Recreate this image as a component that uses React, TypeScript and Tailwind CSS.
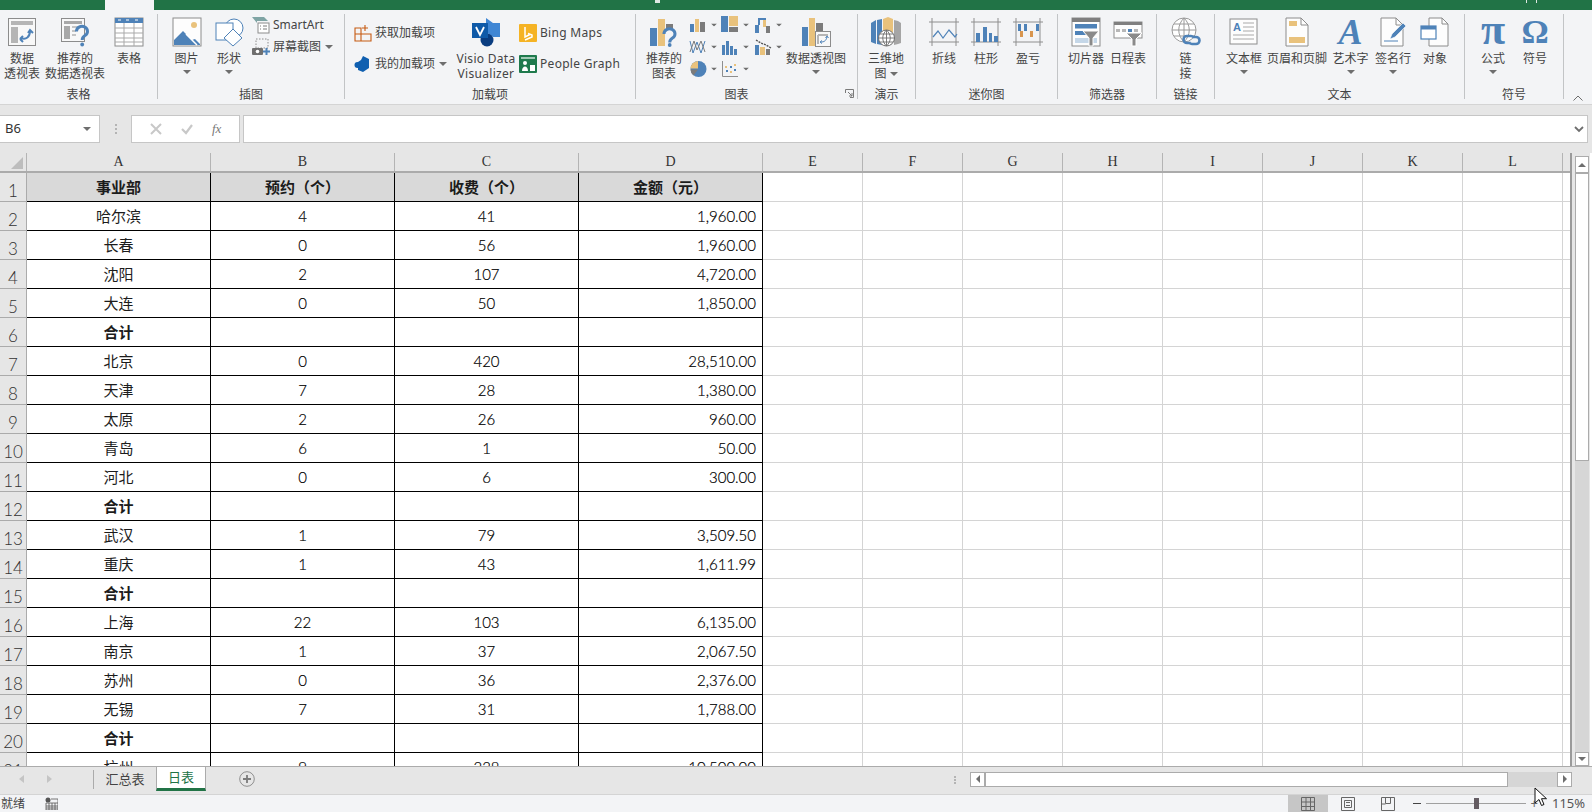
import type { ReactNode } from 'react'

const BLUE = '#4e82b8'
const TAN = '#e9c27c'
const GRAY = '#7b7b7b'
const FRAME = '#8c8c8c'

type RowData = [string, string, string, string, boolean?]

const rows: RowData[] = [
  ['事业部', '预约（个）', '收费（个）', '金额（元）', true],
  ['哈尔滨', '4', '41', '1,960.00'],
  ['长春', '0', '56', '1,960.00'],
  ['沈阳', '2', '107', '4,720.00'],
  ['大连', '0', '50', '1,850.00'],
  ['合计', '', '', '', true],
  ['北京', '0', '420', '28,510.00'],
  ['天津', '7', '28', '1,380.00'],
  ['太原', '2', '26', '960.00'],
  ['青岛', '6', '1', '50.00'],
  ['河北', '0', '6', '300.00'],
  ['合计', '', '', '', true],
  ['武汉', '1', '79', '3,509.50'],
  ['重庆', '1', '43', '1,611.99'],
  ['合计', '', '', '', true],
  ['上海', '22', '103', '6,135.00'],
  ['南京', '1', '37', '2,067.50'],
  ['苏州', '0', '36', '2,376.00'],
  ['无锡', '7', '31', '1,788.00'],
  ['合计', '', '', '', true],
  ['杭州', '9', '238', '10,500.00']
]

const sideCols = ['E', 'F', 'G', 'H', 'I', 'J', 'K', 'L']

function Caret({ className = '' }: { className?: string }) {
  return (
    <svg viewBox="0 0 8 4" className={`h-[4px] w-[8px] shrink-0 ${className}`}>
      <path d="M0 0h8L4 4z" fill="#6e6e6e" />
    </svg>
  )
}

function Icon({ children, size = 30 }: { children: ReactNode; size?: number }) {
  return (
    <svg viewBox={`0 0 ${size} ${size}`} width={size} height={size} className="shrink-0">
      {children}
    </svg>
  )
}

function Small({ children }: { children: ReactNode }) {
  return (
    <svg viewBox="0 0 18 18" width={18} height={18} className="shrink-0">
      {children}
    </svg>
  )
}

function Group({
  className,
  pad = '',
  labelClass = '',
  label,
  children,
  extra
}: {
  className: string
  pad?: string
  labelClass?: string
  label: string
  children: ReactNode
  extra?: ReactNode
}) {
  return (
    <div className={`relative mt-[4px] flex h-[85px] shrink-0 flex-col border-r border-[#c2c4c6] ${className}`}>
      <div className={`flex h-[73px] shrink-0 ${pad}`}>{children}</div>
      <div className={`h-[12px] text-center leading-[15px] ${labelClass}`}>{label}</div>
      {extra}
    </div>
  )
}

function BigBtn({ className, icon, lines, caret }: { className: string; icon: ReactNode; lines: string[]; caret?: boolean }) {
  return (
    <div className={`flex shrink-0 flex-col items-center pt-[3px] ${className}`}>
      <div className="flex h-[30px] items-center justify-center">{icon}</div>
      <div className="mt-[4px] whitespace-nowrap text-center leading-[15px]">
        {lines.map((line) => (
          <div key={line}>{line}</div>
        ))}
      </div>
      {caret ? <Caret className="mt-[4px]" /> : null}
    </div>
  )
}

function SmallBtn({ icon, text, caret, className = '' }: { icon: ReactNode; text: string; caret?: boolean; className?: string }) {
  return (
    <div className={`flex h-[22px] items-center whitespace-nowrap ${className}`}>
      {icon}
      <span className="ml-[3px]">{text}</span>
      {caret ? <Caret className="ml-[4px]" /> : null}
    </div>
  )
}

function ChartBtn({ icon }: { icon: ReactNode }) {
  return (
    <div className="flex h-[22px] w-[32px] items-center">
      {icon}
      <Caret className="ml-[3px] scale-75" />
    </div>
  )
}

const PivotIcon = (
  <Icon>
    <rect x="1.5" y="1.5" width="27" height="27" fill="#f8f8f8" stroke={FRAME} />
    <rect x="4" y="4" width="22" height="4" fill="#b5b5b5" />
    <rect x="4" y="10" width="7" height="16" fill="#b5b5b5" />
    <path d="M14 21c5 2 9-1 9-7M13 22l3-3M13 22l3 3M21 16l2-3 3 3" fill="none" stroke={BLUE} strokeWidth="2" />
  </Icon>
)

const RecommendPivotIcon = (
  <Icon>
    <rect x="1.5" y="1.5" width="23" height="23" fill="#f8f8f8" stroke={FRAME} />
    <rect x="4" y="4" width="18" height="3" fill="#a8a8a8" />
    <rect x="4" y="9" width="6" height="13" fill="#a8a8a8" />
    <path d="M12 10h8M12 14h4M12 18h4" stroke="#c4c4c4" strokeWidth="2" />
    <path d="M16.500 14.500a5.500 5 0 1 1 8.500 4c-2 1.300-2.800 2.300-2.800 4.500" fill="none" stroke={BLUE} strokeWidth="3" />
    <circle cx="22.200" cy="27.500" r="1.900" fill={BLUE} />
  </Icon>
)

const TableIcon = (
  <Icon>
    <rect x="1" y="1" width="28" height="28" fill="#fff" stroke={FRAME} />
    <rect x="1" y="1" width="28" height="5" fill={BLUE} />
    <path d="M4 3h3M12 3h3M21 3h3" stroke="#fff" />
    <path d="M1 11h28M1 16h28M1 21h28M1 25h28M10 6v23M20 6v23" stroke="#a9a9a9" />
  </Icon>
)

const PictureIcon = (
  <Icon>
    <rect x="1" y="1" width="28" height="28" fill="#fdfdfd" stroke={FRAME} />
    <circle cx="22" cy="8" r="3" fill={TAN} />
    <path d="M2 28V23l9-9 9 9 3-1 5 5v1z" fill={BLUE} />
    <path d="M14 17l11 11" stroke="#fff" strokeWidth="1.500" />
  </Icon>
)

const ShapesIcon = (
  <Icon>
    <circle cx="20" cy="11" r="9" fill="#fff" stroke={BLUE} />
    <rect x="2" y="6" width="17" height="17" fill="#fff" stroke={BLUE} />
    <path d="M19 12l9 9-9 8-9-8z" fill="#fff" stroke={BLUE} />
  </Icon>
)

const VisioIcon = (
  <Icon size={30}>
    <path d="M15 1l7 5h7v14h-7l-7-5z" fill="#3f86d4" />
    <circle cx="16" cy="23" r="6.500" fill="#0a3d80" />
    <rect x="1" y="6" width="16" height="15" fill="#0f5aa8" />
    <path d="M5 10l4 8 4-8" fill="none" stroke="#fff" strokeWidth="1.800" />
  </Icon>
)

const RecommendChartIcon = (
  <Icon>
    <rect x="1" y="11" width="7" height="18" fill={BLUE} />
    <rect x="9" y="2" width="7" height="27" fill={TAN} />
    <rect x="17" y="7" width="7" height="5" fill={GRAY} />
    <path d="M15 17a5.500 5 0 1 1 8.500 4c-2 1.300-2.800 2.300-2.800 4.500" fill="none" stroke={BLUE} strokeWidth="3" />
    <circle cx="20.700" cy="28" r="1.900" fill={BLUE} />
  </Icon>
)

const PivotChartIcon = (
  <Icon>
    <rect x="1" y="10" width="6" height="19" fill={BLUE} />
    <rect x="8" y="1" width="6" height="28" fill={TAN} />
    <rect x="15" y="6" width="7" height="10" fill={GRAY} />
    <rect x="14.500" y="14.500" width="15" height="15" fill="#f8f8f8" stroke={FRAME} />
    <path d="M17 18h10M17 18v9" stroke="#b5b5b5" strokeWidth="2" />
    <path d="M20 25c3 0 5-1 6-5M19 25l2-1.500M19 25l2 1.500M24.500 21l1.500-2 1.500 2" fill="none" stroke={BLUE} />
  </Icon>
)

const Map3dIcon = (
  <Icon>
    <path d="M0 6l5-3v24l-5-2z" fill={BLUE} />
    <path d="M6 3l5-1v26l-5-1z" fill={BLUE} />
    <path d="M12 2l5-2 5 2v20H12z" fill={TAN} />
    <path d="M23 3l4 1 3 2v20l-3 1-4 1z" fill="#a5a5a5" />
    <circle cx="15.500" cy="21" r="8" fill="#fff" stroke="#6f6f6f" />
    <path d="M7.500 21h16M15.500 13v16M9 17h13M9 25h13M15.500 13c-5 5-5 11 0 16M15.500 13c5 5 5 11 0 16" fill="none" stroke="#6f6f6f" strokeWidth=".9" />
  </Icon>
)

const LineSparkIcon = (
  <Icon>
    <path d="M0 5h30M0 25h30M3 1v28M27 1v28" stroke="#8e8e8e" />
    <path d="M4 20l5-6 5 7 6-8 6 7 2-3" fill="none" stroke={BLUE} strokeWidth="1.200" />
  </Icon>
)

const BarSparkIcon = (
  <Icon>
    <path d="M0 5h30M0 25h30M3 1v28M27 1v28" stroke="#8e8e8e" />
    <path d="M5 16h4v9H5zM12 10h4v15h-4zM18 16h3v9h-3zM23 19h4v6h-4z" fill={BLUE} />
  </Icon>
)

const WinLossIcon = (
  <Icon>
    <path d="M0 5h30M0 25h30M3 1v28M27 1v28" stroke="#8e8e8e" />
    <path d="M5 7h3v7H5zM11 7h3v7h-3zM23 7h3v7h-3z" fill={BLUE} />
    <path d="M7 14h3v6H7zM17 14h3v6h-3z" fill="#d9964f" />
  </Icon>
)

const SlicerIcon = (
  <Icon>
    <rect x="1" y="1" width="28" height="28" fill="#fdfdfd" stroke={FRAME} />
    <rect x="1" y="1" width="28" height="4" fill="#7f7f7f" />
    <rect x="4" y="7" width="22" height="4.500" fill={BLUE} />
    <rect x="4" y="14" width="11" height="4" fill={BLUE} />
    <rect x="4" y="21" width="22" height="5" fill="#c5d7e8" />
    <path d="M12 14h16l-6 7v8h-4v-8z" fill="#8a8a8a" stroke="#fff" />
  </Icon>
)

const TimelineIcon = (
  <Icon>
    <rect x="1" y="5" width="28" height="16" fill="#fdfdfd" stroke={FRAME} />
    <rect x="1" y="5" width="28" height="3" fill="#7f7f7f" />
    <path d="M3 12h4v3H3zM9 12h4v3H9z" fill="#b7b7b7" />
    <path d="M15 12h4v3h-4z" fill={BLUE} />
    <path d="M21 12h4v3h-4z" fill="#b7b7b7" />
    <path d="M13 16h16l-6 6v7h-4v-7z" fill="#8a8a8a" stroke="#fff" />
  </Icon>
)

const LinkIcon = (
  <Icon>
    <circle cx="13" cy="13" r="12" fill="#fff" stroke="#9a9a9a" />
    <path d="M1 13h24M13 1v24M3 7h20M3 19h20M13 1c-7 7-7 17 0 24M13 1c7 7 7 17 0 24" fill="none" stroke="#9a9a9a" />
    <path d="M19 26h-3a3.500 3.500 0 0 1 0-7h4a3.500 3.500 0 0 1 3 2M22 20h3a3.500 3.500 0 0 1 0 7h-4a3.500 3.500 0 0 1-3-2" fill="none" stroke={BLUE} strokeWidth="2.600" />
  </Icon>
)

const TextBoxIcon = (
  <Icon>
    <rect x="1" y="2" width="27" height="25" fill="#fdfdfd" stroke={FRAME} />
    <text x="4" y="14" fontSize="11" fontWeight="700" fontFamily="Liberation Sans" fill={BLUE}>A</text>
    <path d="M14 6h11M14 10h11M14 14h11M4 18h21M4 22h21" stroke="#a9a9a9" />
  </Icon>
)

const HeaderFooterIcon = (
  <Icon>
    <path d="M4 1h15l7 7v21H4z" fill="#fdfdfd" stroke={FRAME} />
    <path d="M19 1v7h7" fill="none" stroke={FRAME} />
    <rect x="7" y="4" width="8" height="5" fill={TAN} />
    <rect x="7" y="20" width="16" height="6" fill={TAN} />
  </Icon>
)

const SignatureIcon = (
  <Icon>
    <path d="M3 1h15l7 7v21H3z" fill="#fdfdfd" stroke={FRAME} />
    <path d="M18 1v7h7" fill="none" stroke={FRAME} />
    <path d="M6 24h14" stroke={BLUE} />
    <path d="M12 22l2-5 11-11 3 3-11 11z" fill={BLUE} stroke="#fff" strokeWidth=".6" />
  </Icon>
)

const ObjectIcon = (
  <Icon>
    <path d="M9 1h13l6 6v22H9z" fill="#fdfdfd" stroke={FRAME} />
    <path d="M22 1v6h6" fill="none" stroke={FRAME} />
    <rect x="1" y="9" width="15" height="13" fill="#fff" stroke={BLUE} strokeWidth="1.200" />
    <rect x="1" y="9" width="15" height="3.500" fill={BLUE} />
  </Icon>
)

function CheckMark() {
  return (
    <svg viewBox="0 0 12 12" width={12} height={12}>
      <path d="M1 6l4 4 6-8" fill="none" stroke="#c8c8c8" strokeWidth="2.200" />
    </svg>
  )
}

function Ribbon() {
  return (
    <div className="flex h-[95px] shrink-0 border-b border-[#d4d4d4] bg-[#f3f4f6]">
      <Group className="w-[158px]" label="表格">
        <BigBtn className="w-[44px]" icon={PivotIcon} lines={['数据', '透视表']} />
        <BigBtn className="w-[62px]" icon={RecommendPivotIcon} lines={['推荐的', '数据透视表']} />
        <BigBtn className="w-[46px]" icon={TableIcon} lines={['表格']} />
      </Group>

      <Group className="w-[187px]" pad="pl-[4px]" label="插图">
        <BigBtn className="w-[49px]" icon={PictureIcon} lines={['图片']} caret />
        <BigBtn className="w-[36px]" icon={ShapesIcon} lines={['形状']} caret />
        <div className="ml-[5px] flex flex-col">
          <SmallBtn
            text="SmartArt"
            icon={
              <Small>
                <path d="M0 1h12l4 4H5v2z" fill="#7fa4a4" />
                <rect x="6" y="7" width="11" height="10" fill="#fff" stroke={FRAME} />
                <path d="M8 10h1M8 13h1M11 10h4M11 13h4" stroke={GRAY} />
              </Small>
            }
          />
          <SmallBtn
            text="屏幕截图"
            caret
            icon={
              <Small>
                <rect x="4" y="1" width="12" height="9" fill="none" stroke={FRAME} strokeDasharray="1.500 1.500" />
                <rect x="0" y="10" width="11" height="7" rx="1" fill="#6f6f6f" />
                <circle cx="5.500" cy="13.500" r="1.800" fill="#fff" />
                <path d="M14.500 10v7M11 13.500h7" stroke={BLUE} strokeWidth="2" />
              </Small>
            }
          />
        </div>
      </Group>

      <Group className="w-[291px]" label="加载项">
        <div className="ml-[9px] flex w-[102px] flex-col pt-[8px]">
          <SmallBtn
            text="获取加载项"
            icon={
              <Small>
                <path d="M1 4h6v13H1zM7 10h10v7H7zM1 10h6M11 1v6M8 4h6" fill="none" stroke="#c55a11" strokeWidth="1.100" />
              </Small>
            }
          />
          <SmallBtn
            className="mt-[9px]"
            text="我的加载项"
            caret
            icon={
              <Small>
                <path d="M9 1l6 3v9l-6 4-5-2V7l3-2z" fill="#0f5fb0" />
                <circle cx="3.500" cy="10" r="3" fill="#0f5fb0" />
              </Small>
            }
          />
        </div>
        <BigBtn className="w-[60px] tracking-[0.3px]" icon={VisioIcon} lines={['Visio Data', 'Visualizer']} />
        <div className="ml-[3px] flex flex-col pt-[8px] tracking-[0.3px]">
          <SmallBtn
            text="Bing Maps"
            icon={
              <Small>
                <rect x="0" y="0" width="18" height="18" rx="1" fill="#f5b324" />
                <path d="M6 3v10l5-2.500-2-1 4 1.500v2l-7 3" fill="none" stroke="#fff" strokeWidth="1.500" />
              </Small>
            }
          />
          <SmallBtn
            className="mt-[9px]"
            text="People Graph"
            icon={
              <Small>
                <rect x="0" y="0" width="18" height="18" rx="1" fill="#1f7a4d" />
                <circle cx="6" cy="8" r="2" fill="#fff" />
                <path d="M3 16c0-6 6-6 6 0zM11 10h5v6h-5z" fill="#fff" />
                <path d="M2 3h14" stroke="#cde4d8" strokeWidth="1.500" />
              </Small>
            }
          />
        </div>
      </Group>

      <Group
        className="w-[222px]"
        pad="pl-[8px]"
        labelClass="pr-[20px]"
        label="图表"
        extra={
          <svg viewBox="0 0 9 9" width={9} height={9} className="absolute bottom-[1px] right-[3px]">
            <path d="M.5 4V.5H8.500V8.500H5M3 3l4 4M7 4v3H4" fill="none" stroke="#7a7a7a" />
          </svg>
        }
      >
        <BigBtn className="w-[40px]" icon={RecommendChartIcon} lines={['推荐的', '图表']} />
        <div className="ml-[5px] grid w-[97px] grid-cols-3 content-start">
          <ChartBtn
            icon={
              <Small>
                <path d="M1 8h4v8H1zM6 3h4v13H6z" fill={BLUE} />
                <path d="M6 3h4v13H6z" fill={TAN} />
                <path d="M11 6h5v10h-5z" fill={GRAY} />
                <path d="M1 8h4v8H1z" fill={BLUE} />
              </Small>
            }
          />
          <ChartBtn
            icon={
              <Small>
                <path d="M0 0h7v16H0z" fill={BLUE} />
                <path d="M8 0h9v10H8z" fill={TAN} />
                <path d="M8 11h9v5H8z" fill={GRAY} />
              </Small>
            }
          />
          <ChartBtn
            icon={
              <Small>
                <path d="M1 9h4v8H1z" fill={BLUE} />
                <path d="M5 9V3h6v6" fill="none" stroke={BLUE} strokeWidth="2" />
                <path d="M9 4h3v7H9z" fill={TAN} />
                <path d="M12 10h4v7h-4z" fill={GRAY} />
              </Small>
            }
          />
          <ChartBtn
            icon={
              <Small>
                <path d="M1 3l3 12 4-11 4 11 4-12" fill="none" stroke={BLUE} />
                <path d="M1 14l4-11 3 9 4-9 4 11" fill="none" stroke={GRAY} />
              </Small>
            }
          />
          <ChartBtn
            icon={
              <Small>
                <path d="M1 7h3v10H1zM5 3h3v14H5zM9 8h3v9H9zM13 11h3v6h-3z" fill={BLUE} />
              </Small>
            }
          />
          <ChartBtn
            icon={
              <Small>
                <path d="M1 7h4v10H1z" fill={BLUE} />
                <path d="M6 9h5v8H6z" fill={TAN} />
                <path d="M12 11h4v6h-4z" fill={GRAY} />
                <path d="M2 2l5 3 5 2 5 3" fill="none" stroke="#555" strokeDasharray="2 1" strokeWidth="1.400" />
              </Small>
            }
          />
          <ChartBtn
            icon={
              <Small>
                <circle cx="9.500" cy="9" r="8" fill={BLUE} />
                <path d="M9 1a8 8 0 0 0-7.500 7.500H9z" fill={TAN} />
                <path d="M1.500 9.500a8 8 0 0 0 3 6L9 9.500z" fill={GRAY} />
              </Small>
            }
          />
          <ChartBtn
            icon={
              <Small>
                <path d="M1.500 1v15.500H17" fill="none" stroke="#8e8e8e" />
                <path d="M5 10h2v2H5zM9 6h2v2H9zM13 9h2v2h-2z" fill={BLUE} />
                <path d="M4 6h2v2H4zM9 11h2v2H9zM13 4h2v2h-2z" fill={TAN} />
              </Small>
            }
          />
        </div>
        <BigBtn className="w-[60px]" icon={PivotChartIcon} lines={['数据透视图']} caret />
      </Group>

      <Group className="w-[58px]" label="演示">
        <div className="flex w-[56px] flex-col items-center pt-[3px]">
          <div className="flex h-[30px] items-center">{Map3dIcon}</div>
          <div className="mt-[4px] text-center leading-[15px]">三维地</div>
          <div className="flex items-center leading-[15px]">
            图<Caret className="ml-[3px]" />
          </div>
        </div>
      </Group>

      <Group className="w-[142px]" pad="pl-[7px]" label="迷你图">
        <BigBtn className="w-[42px]" icon={LineSparkIcon} lines={['折线']} />
        <BigBtn className="w-[42px]" icon={BarSparkIcon} lines={['柱形']} />
        <BigBtn className="w-[42px]" icon={WinLossIcon} lines={['盈亏']} />
      </Group>

      <Group className="w-[99px]" pad="pl-[7px]" label="筛选器">
        <BigBtn className="w-[42px]" icon={SlicerIcon} lines={['切片器']} />
        <BigBtn className="w-[42px]" icon={TimelineIcon} lines={['日程表']} />
      </Group>

      <Group className="w-[58px]" label="链接">
        <BigBtn className="w-[57px]" icon={LinkIcon} lines={['链', '接']} />
      </Group>

      <Group className="w-[250px]" pad="pl-[7px]" label="文本">
        <BigBtn className="w-[44px]" icon={TextBoxIcon} lines={['文本框']} caret />
        <BigBtn className="w-[62px]" icon={HeaderFooterIcon} lines={['页眉和页脚']} />
        <BigBtn
          className="w-[45px]"
          icon={<span className="h-[30px] text-[36px] font-bold italic leading-[30px] text-[#4e82b8] [font-family:'Liberation_Serif',serif]">A</span>}
          lines={['艺术字']}
          caret
        />
        <BigBtn className="w-[40px]" icon={SignatureIcon} lines={['签名行']} caret />
        <BigBtn className="w-[44px]" icon={ObjectIcon} lines={['对象']} />
      </Group>

      <Group className="w-[99px]" pad="pl-[7px]" label="符号">
        <BigBtn
          className="w-[42px]"
          icon={<span className="h-[30px] text-[44px] font-bold leading-[26px] text-[#4e82b8] [font-family:'Liberation_Serif',serif]">π</span>}
          lines={['公式']}
          caret
        />
        <BigBtn
          className="w-[42px]"
          icon={<span className="h-[30px] text-[34px] font-bold leading-[30px] text-[#4e82b8] [font-family:'Liberation_Serif',serif]">Ω</span>}
          lines={['符号']}
        />
      </Group>

      <div className="flex flex-1 items-end justify-center pb-[3px]">
        <svg viewBox="0 0 10 6" width={10} height={6}>
          <path d="M.5 5.500L5 1l4.500 4.500" fill="none" stroke="#6e6e6e" />
        </svg>
      </div>
    </div>
  )
}

function FormulaBar() {
  return (
    <div className="flex h-[48px] shrink-0 bg-[#e6e6e6] pt-[10px]">
      <div className="flex h-[28px] w-[100px] items-center justify-between border border-l-0 border-[#c6c6c6] bg-white pl-[5px] pr-[8px] text-[13px] text-[#333]">
        B6
        <Caret />
      </div>
      <div className="flex h-[28px] w-[31px] flex-col items-center justify-center gap-[2px]">
        <span className="size-[2px] bg-[#b4b4b4]" />
        <span className="size-[2px] bg-[#b4b4b4]" />
        <span className="size-[2px] bg-[#b4b4b4]" />
      </div>
      <div className="flex h-[28px] w-[109px] items-center justify-around border border-[#c6c6c6] bg-white px-[8px]">
        <svg viewBox="0 0 12 12" width={12} height={12}>
          <path d="M1 1l10 10M11 1L1 11" stroke="#c8c8c8" strokeWidth="2" />
        </svg>
        <CheckMark />
        <span className="text-[13px] italic text-[#777] [font-family:'Liberation_Serif',serif]">fx</span>
      </div>
      <div className="ml-[3px] flex h-[28px] w-[1345px] items-center justify-end border border-[#c6c6c6] bg-white pr-[3px]">
        <svg viewBox="0 0 10 7" width={10} height={7}>
          <path d="M1 1l4 4 6-4" fill="none" stroke="#6e6e6e" strokeWidth="0" />
          <path d="M1 1l4 4 4-4" fill="none" stroke="#6e6e6e" strokeWidth="1.800" />
        </svg>
      </div>
    </div>
  )
}

function DataRow({ row, index }: { row: RowData; index: number }) {
  const [name, booked, charged, amount, bold] = row
  const headerRow = index === 0
  const cell = `flex h-full w-[184px] shrink-0 items-center border-b border-r border-black ${headerRow ? 'bg-[#d9d9d9]' : ''}`
  const nameText = bold ? 'font-bold text-[#1c1c1c]' : 'font-normal text-[#1c1c1c]'
  const numText = bold ? 'font-bold text-[#1c1c1c]' : 'font-light text-black [-webkit-text-stroke:0.2px_black]'
  return (
    <div className="flex h-[29px] shrink-0">
      <div className="flex h-full w-[27px] shrink-0 items-end justify-center border-b border-r border-[#ababab] bg-[#e6e6e6] pb-[1px] text-[17px] font-light leading-[18px] text-[#333] [font-family:Lato,sans-serif]">
        {index + 1}
      </div>
      <div className={`${cell} ${nameText} justify-center`}>{name}</div>
      <div className={`${cell} ${numText} justify-center`}>{booked}</div>
      <div className={`${cell} ${numText} justify-center`}>{charged}</div>
      <div className={`${cell} ${numText} ${headerRow ? 'justify-center' : 'justify-end pr-[6px]'}`}>{amount}</div>
      {sideCols.map((col) => (
        <div key={col} className="h-full w-[100px] shrink-0 border-b border-r border-[#d4d4d4]" />
      ))}
      <div className="h-full flex-1 border-b border-[#d4d4d4]" />
    </div>
  )
}

function Sheet() {
  const headCell = 'flex h-full shrink-0 items-center justify-center border-r border-[#b4b4b4]'
  return (
    <div className="flex min-h-0 flex-1">
      <div className="flex w-[1572px] shrink-0 flex-col overflow-hidden border-r-2 border-[#9a9a9a] text-[15px] [font-family:Lato,'Noto_Sans_CJK_SC',sans-serif]">
        <div className="flex h-[20px] shrink-0 border-b-2 border-[#ababab] bg-[#e6e6e6] text-[14px] leading-none text-[#333] [font-family:'Liberation_Serif',serif]">
          <div className={`${headCell} w-[27px] items-end justify-end pb-[2px] pr-[3px]`}>
            <svg viewBox="0 0 12 12" width={12} height={12}>
              <path d="M12 0v12H0z" fill="#bdbdbd" />
            </svg>
          </div>
          {['A', 'B', 'C', 'D'].map((col) => (
            <div key={col} className={`${headCell} w-[184px]`}>
              {col}
            </div>
          ))}
          {sideCols.map((col) => (
            <div key={col} className={`${headCell} w-[100px]`}>
              {col}
            </div>
          ))}
        </div>
        {rows.map((row, index) => (
          <DataRow key={index} row={row} index={index} />
        ))}
      </div>

      <div className="flex w-[18px] shrink-0 flex-col bg-[#e6e6e6] pl-[3px] pr-[1px] pt-[3px]">
        <div className="flex h-[17px] items-center justify-center border border-[#ababab] bg-white">
          <svg viewBox="0 0 8 4" width={8} height={4}>
            <path d="M0 4h8L4 0z" fill="#6e6e6e" />
          </svg>
        </div>
        <div className="h-[288px] border border-[#ababab] bg-white" />
        <div className="flex-1 bg-[#d6d6d6]" />
        <div className="flex h-[14px] items-center justify-center border border-[#ababab] bg-white">
          <Caret />
        </div>
      </div>
    </div>
  )
}

function SheetTabs() {
  return (
    <div className="flex h-[28px] shrink-0 border-t border-[#ababab] bg-[#e6e6e6] text-[13px] text-[#444]">
      <div className="flex w-[93px] items-center pb-[3px] pl-[19px]">
        <svg viewBox="0 0 5 8" width={5} height={8}>
          <path d="M5 0v8L0 4z" fill="#c4c4c4" />
        </svg>
        <svg viewBox="0 0 5 8" width={5} height={8} className="ml-[23px]">
          <path d="M0 0v8l5-4z" fill="#c4c4c4" />
        </svg>
      </div>
      <div className="my-[3px] mb-[5px] flex w-[63px] items-center justify-center border-l border-[#ababab]">汇总表</div>
      <div className="flex h-[24px] w-[50px] items-center justify-center border-x border-b-[3px] border-x-[#ababab] border-b-[#217346] bg-white text-[#217346]">
        日表
      </div>
      <div className="ml-[33px] flex h-[24px] items-center">
        <svg viewBox="0 0 16 16" width={16} height={16}>
          <circle cx="8" cy="8" r="7.300" fill="none" stroke="#8f8f8f" />
          <path d="M8 4v8M4 8h8" stroke="#7b7b7b" strokeWidth="1.800" />
        </svg>
      </div>
      <div className="ml-auto flex h-[24px] items-center pr-[20px]">
        <div className="mr-[14px] flex flex-col gap-[1px] pt-[1px]">
          <span className="size-[2px] bg-[#b4b4b4]" />
          <span className="size-[2px] bg-[#b4b4b4]" />
          <span className="size-[2px] bg-[#b4b4b4]" />
        </div>
        <div className="flex h-[15px] w-[15px] items-center justify-center border border-[#ababab] bg-white">
          <svg viewBox="0 0 4 8" width={4} height={8}>
            <path d="M4 0v8L0 4z" fill="#6e6e6e" />
          </svg>
        </div>
        <div className="h-[15px] w-[523px] border border-[#ababab] bg-white" />
        <div className="h-[15px] w-[49px] bg-[#d6d6d6]" />
        <div className="flex h-[15px] w-[15px] items-center justify-center border border-[#ababab] bg-white">
          <svg viewBox="0 0 4 8" width={4} height={8}>
            <path d="M0 0v8l4-4z" fill="#6e6e6e" />
          </svg>
        </div>
      </div>
    </div>
  )
}

function StatusBar() {
  return (
    <div className="flex h-[18px] shrink-0 items-center border-t border-[#d4d4d4] bg-[#f3f4f6] pl-[1px] text-[12px] text-[#444]">
      <span className="w-[44px]">就绪</span>
      <svg viewBox="0 0 13 13" width={13} height={13}>
        <circle cx="3" cy="3" r="2.500" fill="#555" />
        <path d="M6 2h7v11H1V6h12M1 9h12M1 11h12M4 6v7M7 6v7M10 6v7" fill="none" stroke="#555" strokeWidth=".8" />
      </svg>
      <div className="ml-auto flex h-full items-center">
        <div className="flex h-full w-[40px] items-center justify-center bg-[#c6c6c6]">
          <svg viewBox="0 0 14 14" width={14} height={14}>
            <path d="M.5.5h13v13H.5zM5 .5v13M9.500.5v13M.5 5h13M.5 9.500h13" fill="none" stroke="#666" />
          </svg>
        </div>
        <div className="flex h-full w-[40px] items-center justify-center">
          <svg viewBox="0 0 14 14" width={14} height={14}>
            <path d="M.5.5h13v13H.5zM3.500 3.500h7v7h-7zM5 5.500h4M5 8.500h4" fill="none" stroke="#666" />
          </svg>
        </div>
        <div className="flex h-full w-[40px] items-center justify-center">
          <svg viewBox="0 0 14 14" width={14} height={14}>
            <path d="M.5.5h13v13H.5zM4.500.5v6h5v-6M.5 7h4" fill="none" stroke="#666" />
          </svg>
        </div>
        <span className="ml-[5px] h-[1px] w-[8px] bg-[#444]" />
        <div className="ml-[5px] flex h-[1px] w-[100px] items-center bg-[#a0a0a0] pl-[48px]">
          <span className="h-[11px] w-[5px] bg-[#655d63]" />
        </div>
        <span className="ml-[5px] text-[13px] leading-none text-[#666]">+</span>
        <span className="ml-[14px] w-[40px] text-[13px] text-[#555]">115%</span>
      </div>
    </div>
  )
}

export default function App() {
  return (
    <div className="relative flex h-[812px] w-[1592px] flex-col overflow-hidden bg-white text-[12px] text-[#444] [font-family:'Noto_Sans','Noto_Sans_CJK_SC',sans-serif]">
      <div className="flex h-[10px] shrink-0 bg-[#217346]">
        <div className="w-[105px]" />
        <div className="w-[49px] bg-[#f3f4f6]" />
        <div className="ml-[501px] h-[3px] w-[5px] bg-[#dfe9e3]" />
        <div className="ml-[866px] h-[3px] w-[1px] bg-[#dfe9e3]" />
        <div className="ml-[9px] h-[3px] w-[1px] bg-[#dfe9e3]" />
      </div>
      <Ribbon />
      <FormulaBar />
      <Sheet />
      <SheetTabs />
      <StatusBar />

      <svg viewBox="0 0 13 20" width={13} height={20} className="absolute left-[1534px] top-[787px]">
        <path d="M1 1v15l4-3.500 2.500 6 2.500-1-2.500-5.800h5z" fill="#fff" stroke="#111" strokeWidth="1" />
      </svg>
    </div>
  )
}
